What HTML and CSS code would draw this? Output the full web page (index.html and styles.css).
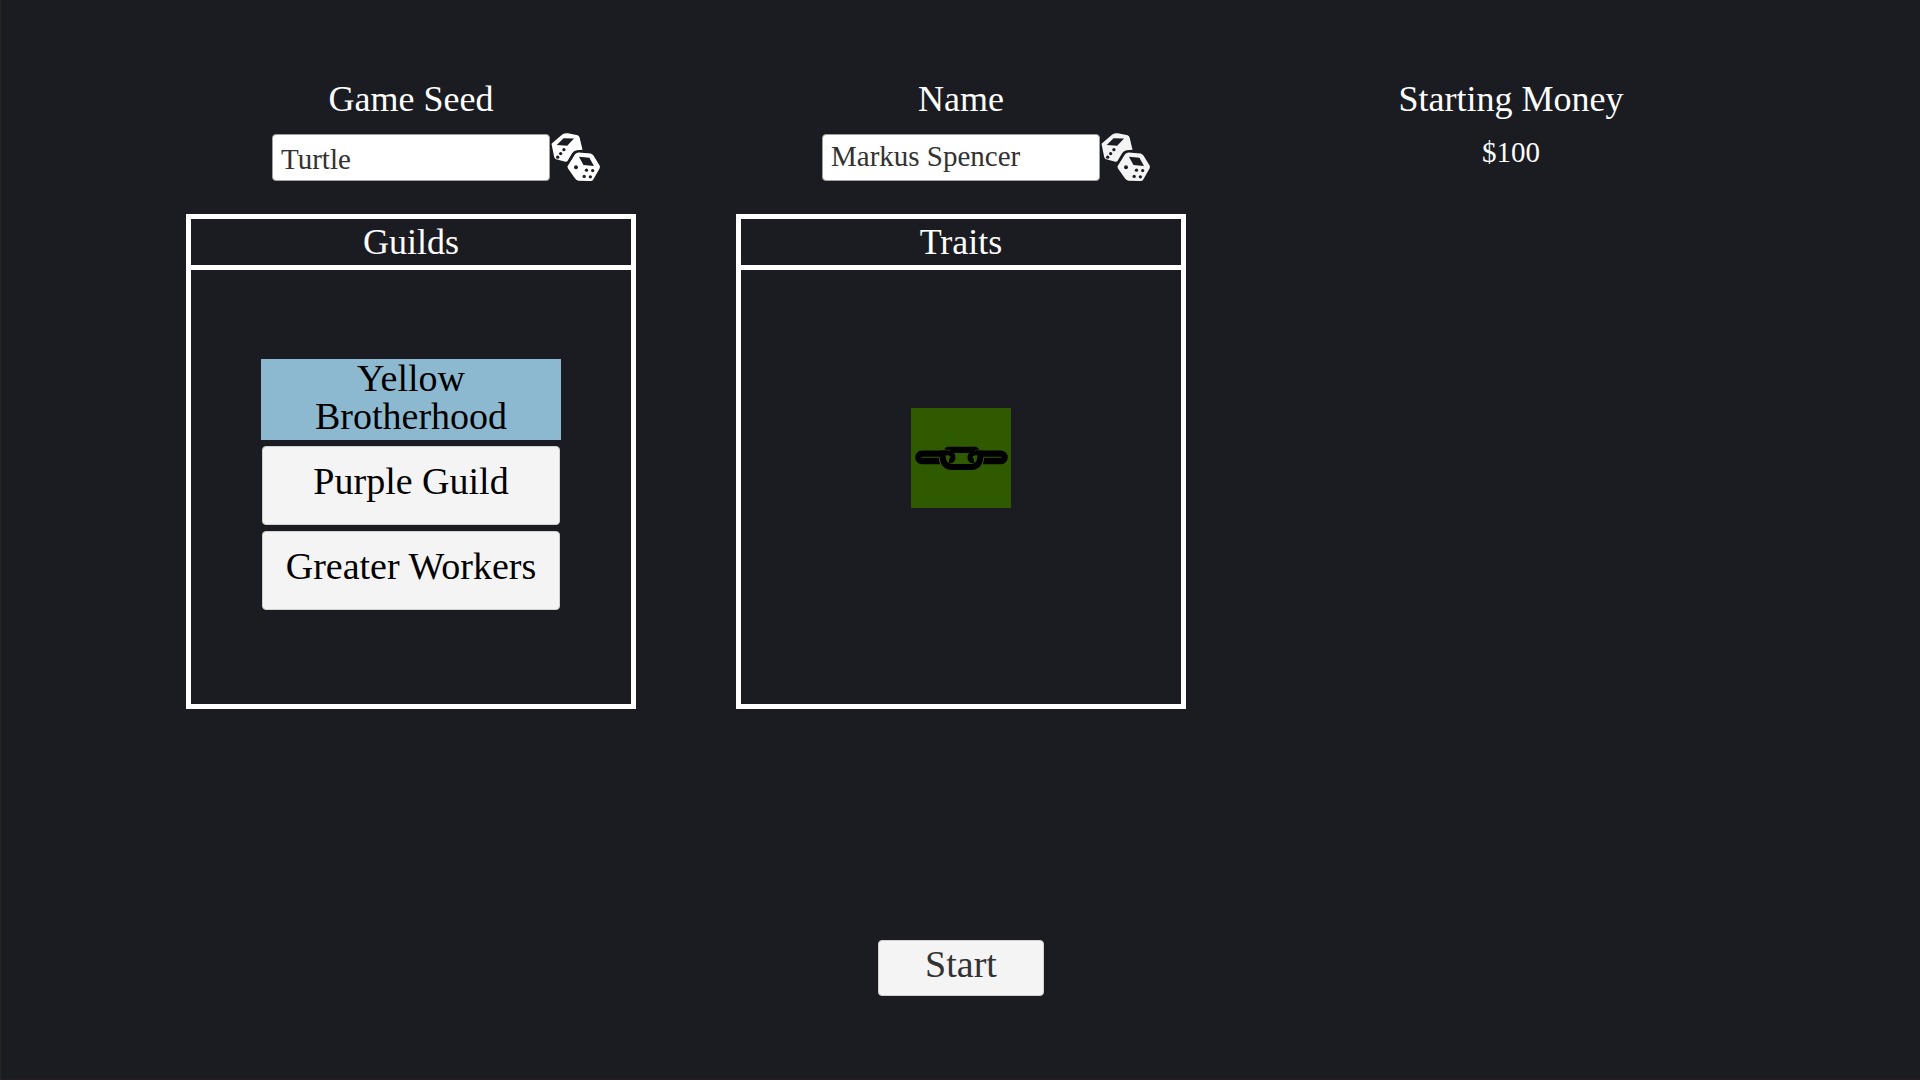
FILE: index.html
```html
<!DOCTYPE html>
<html lang="en">
<head>
<meta charset="utf-8">
<meta name="viewport" content="width=device-width, initial-scale=1">
<title>New Game</title>
<link rel="stylesheet" href="styles.css">
</head>
<body>
<svg class="defs" aria-hidden="true">
  <symbol id="dice" viewBox="0 0 150 150">
    <path fill="currentColor" fill-rule="evenodd" d="M0 33L32 5Q40 0 50 1L80 7Q85 9 86 14L95 51L77 53Q68 55 63 62L49 86Q45 89 40 87L14 80Q9 78 8 73ZM16 37L48 39L69 17L37 16Z"/>
    <path fill="currentColor" fill-rule="evenodd" d="M49 102L72 65Q77 60 83 60L120 63Q126 65 129 70L148 101Q149 105 147 109L128 142Q125 147 120 147L82 146Q75 144 71 138L50 108ZM84 73L98 98L130 101L116 76Z"/>
    <g fill="#1b1c21">
      <circle cx="38" cy="51" r="5"/><circle cx="28" cy="63" r="5"/><circle cx="19" cy="74" r="5"/>
      <circle cx="75" cy="105" r="6"/>
      <circle cx="107" cy="114" r="5"/><circle cx="126" cy="115" r="5"/><circle cx="100" cy="133" r="5"/><circle cx="119" cy="134" r="5"/>
    </g>
  </symbol>
</svg>
<main class="setup">
  <div class="columns">
    <section class="column">
      <label class="heading" for="seed">Game Seed</label>
      <div class="field">
        <input class="field-input" id="seed" type="text" value="Turtle">
        <button class="dice" type="button" aria-label="Random seed"><svg><use href="#dice"/></svg></button>
      </div>
      <div class="panel">
        <h2 class="panel-title">Guilds</h2>
        <div class="panel-body guilds">
          <button class="guild selected" type="button">Yellow Brotherhood</button>
          <button class="guild" type="button">Purple Guild</button>
          <button class="guild" type="button">Greater Workers</button>
        </div>
      </div>
    </section>
    <section class="column">
      <label class="heading" for="name">Name</label>
      <div class="field">
        <input class="field-input raised" id="name" type="text" value="Markus Spencer">
        <button class="dice muted" type="button" aria-label="Random name"><svg><use href="#dice"/></svg></button>
      </div>
      <div class="panel">
        <h2 class="panel-title">Traits</h2>
        <div class="panel-body traits">
          <svg class="trait" viewBox="0 0 300 300" role="img" aria-label="Chain">
            <path d="M99 124L108 116H196L205 124L190 127Q186 133 180 135H128Q122 133 118 127Z"/>
            <g fill="none" stroke="#000" stroke-width="19">
              <path d="M88 159H33A11 11 0 0 1 33 137H90M215 159H270A11 11 0 0 0 270 137H213"/>
              <path stroke="#305a00" stroke-width="24" d="M95 146Q97 177 122 177H181Q206 177 208 146"/>
              <path stroke-width="18" d="M95 136V146Q97 177 122 177H181Q206 177 208 146V136"/>
              <path stroke-width="15" d="M88 134H109Q126 136 126 149Q126 160 114 158M215 134H194Q177 136 177 149Q177 160 189 158"/>
            </g>
          </svg>
        </div>
      </div>
    </section>
    <section class="column">
      <h2 class="heading">Starting Money</h2>
      <p class="money">$100</p>
    </section>
  </div>
  <button class="start" type="button">Start</button>
</main>
</body>
</html>
```
FILE: styles.css
```css
* { box-sizing: border-box; }

body {
  margin: 0;
  background: #1b1c21;
  color: #fff;
  font-family: "Liberation Serif", serif;
}

button, input { font-family: inherit; margin: 0; }

.defs { display: none; }

.setup {
  min-height: 100vh;
  padding: 79px 24px 83px 25px;
  border-left: 1px solid #25262a;
  border-bottom: 1px solid #241d21;
  display: flex;
  flex-direction: column;
  align-items: center;
}

.columns {
  width: 100%;
  display: grid;
  grid-template-columns: repeat(3, minmax(0, 450px));
  column-gap: 100px;
  justify-content: center;
}

.column {
  display: flex;
  flex-direction: column;
  align-items: center;
}

.heading {
  margin: 0 0 15px;
  font-size: 36px;
  font-weight: 400;
  line-height: 40px;
}

.field {
  width: 100%;
  height: 47px;
  display: grid;
  grid-template-columns: 1fr 278px 1fr;
  align-items: center;
  align-content: center;
  margin-bottom: 33px;
}

.field-input {
  grid-column: 2;
  height: 47px;
  padding: 3px 8px 0;
  border: 1px solid #a0a0a0;
  border-radius: 4px;
  background: #fff;
  color: #323232;
  font-size: 29px;
}

.field-input.raised { padding: 0 8px 3px; }

.dice {
  width: 51px;
  height: 49px;
  padding: 0 0 0 1px;
  border: 0;
  background: none;
  color: #fff;
}

.dice.muted { color: #f4f4f4; }

.dice svg {
  display: block;
  width: 50px;
  height: 49px;
}

.panel {
  width: 100%;
  border: 5px solid #fff;
}

.panel-title {
  margin: 0;
  border-bottom: 5px solid #fff;
  font-size: 36px;
  font-weight: 400;
  line-height: 46px;
  text-align: center;
}

.panel-body {
  min-height: 434px;
  display: flex;
  flex-direction: column;
  align-items: center;
  justify-content: center;
}

.guilds { gap: 6px; padding-bottom: 6px; }

.guild {
  width: 298px;
  height: 79px;
  padding: 0 8px 8px;
  border: 1px solid #d0d0d0;
  border-radius: 4px;
  background: #f4f4f4;
  color: #000;
  font-size: 38px;
  line-height: 38px;
}

.guild.selected {
  width: 300px;
  height: 81px;
  padding: 0 48px 8px;
  border: 0;
  border-radius: 0;
  background: #8db9d0;
}

.traits { padding-bottom: 58px; }

.trait {
  width: 100px;
  height: 100px;
  background: #305a00;
}

.money {
  margin: 0;
  font-size: 29px;
  line-height: 36px;
}

.start {
  width: 166px;
  height: 56px;
  margin-top: auto;
  padding: 0 0 8px;
  border: 1px solid #d0d0d0;
  border-radius: 4px;
  background: #f4f4f4;
  color: #323232;
  font-size: 38px;
  line-height: 38px;
}
```
